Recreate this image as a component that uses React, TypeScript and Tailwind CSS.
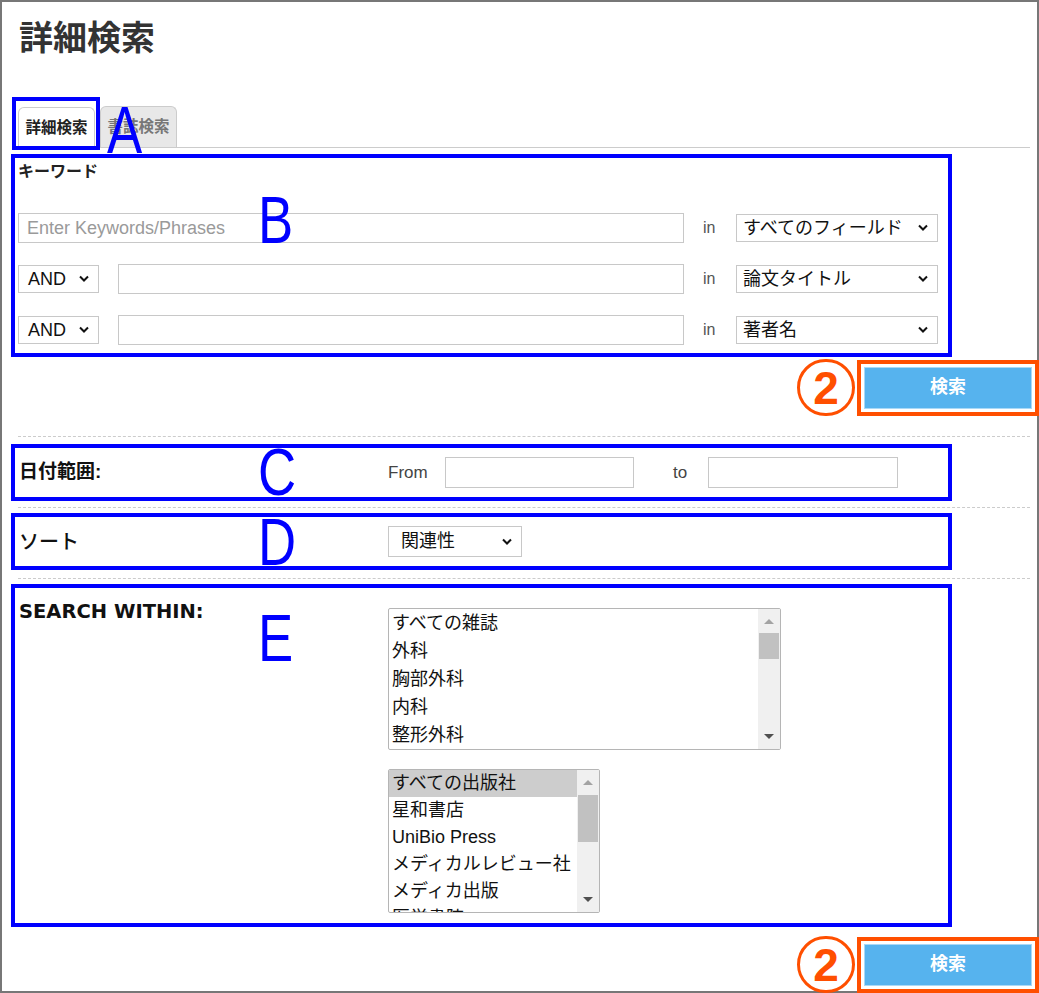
const FONT = "font-['Liberation_Sans','Noto_Sans_CJK_JP',sans-serif]"

function Chevron() {
  return (
    <svg width="12" height="8" viewBox="0 0 12 8" className="shrink-0">
      <polyline points="2,1.5 6,5.5 10,1.5" fill="none" stroke="#111" strokeWidth="2" />
    </svg>
  )
}

function FakeSelect({ label, className }: { label: string; className: string }) {
  return (
    <div className={`flex items-center justify-between border border-[#c8c8c8] bg-white pr-[8px] text-[18px] text-[#111] ${className}`}>
      <span className="whitespace-nowrap">{label}</span>
      <Chevron />
    </div>
  )
}

function TextBox({ className, placeholder }: { className: string; placeholder?: string }) {
  return (
    <div className={`flex items-center border border-[#c8c8c8] bg-white px-[8px] text-[18px] text-[#9a9a9a] ${className}`}>
      {placeholder}
    </div>
  )
}

function ListBox({
  items,
  className,
  lineH,
  selected,
  thumbTop,
  thumbH,
}: {
  items: string[]
  className: string
  lineH: string
  selected?: number
  thumbTop: string
  thumbH: string
}) {
  return (
    <div className={`flex overflow-hidden rounded-[2px] border border-[#b5b5b5] bg-white ${className}`}>
      <div className="flex-1 overflow-hidden">
        {items.map((it, i) => (
          <div
            key={it}
            className={`${lineH} whitespace-nowrap pl-[3px] text-[18px] text-[#111] ${i === selected ? 'bg-[#cdcdcd]' : ''}`}
          >
            {it}
          </div>
        ))}
      </div>
      <div className="relative w-[22px] shrink-0 bg-[#f0f0f0]">
        <svg width="22" height="12" viewBox="0 0 22 12" className="absolute left-0 top-[6px]">
          <polygon points="6,9 11,4 16,9" fill="#a3a3a3" />
        </svg>
        <div className={`absolute left-[1px] right-[1px] bg-[#c1c1c1] ${thumbTop} ${thumbH}`} />
        <svg width="22" height="12" viewBox="0 0 22 12" className="absolute bottom-[6px] left-0">
          <polygon points="6,3 11,8 16,3" fill="#505050" />
        </svg>
      </div>
    </div>
  )
}

function Marker({ label, className }: { label: string; className: string }) {
  return (
    <div
      className={`absolute origin-left scale-x-[0.8] font-['Liberation_Sans',sans-serif] text-[66px] leading-none text-[#0000ff] ${className}`}
    >
      {label}
    </div>
  )
}

function SubmitRow({ className }: { className: string }) {
  return (
    <div className={`-mr-[2px] flex items-center justify-end gap-[2px] ${className}`}>
      <div className="flex h-[57px] w-[58px] items-center justify-center rounded-full border-[3px] border-[#ff4f00] font-['Liberation_Sans',sans-serif] text-[46px] font-bold leading-none text-[#ff4f00]">
        2
      </div>
      <div className="h-[56px] w-[182px] border-4 border-[#ff4f00] bg-white p-[3px]">
        <div className="flex h-full w-full items-center justify-center border border-[#a9d9f7] bg-[#56b3ee] text-[18px] font-bold text-white">
          検索
        </div>
      </div>
    </div>
  )
}

export default function App() {
  return (
    <div className={`relative h-[993px] w-[1039px] border-2 border-[#777] bg-white ${FONT}`}>
      <h1 className="ml-[17px] mt-[16px] text-[34px] font-bold leading-[40px] text-[#333]">詳細検索</h1>

      <div className="ml-[16px] mr-[7px] mt-[48px] flex items-end gap-[5px] border-b border-[#ccc]">
        <div className="-mb-px flex h-[41px] w-[77px] items-center justify-center rounded-t-[6px] border border-b-0 border-[#ccc] bg-white text-[15.5px] font-bold text-[#222]">
          詳細検索
        </div>
        <div className="flex h-[41px] w-[77px] items-center justify-center rounded-t-[6px] border border-b-0 border-[#ccc] bg-[#e8e8e8] text-[15.5px] font-bold text-[#777]">
          書誌検索
        </div>
      </div>

      {/* B: keywords */}
      <div className="ml-[9px] mt-[6px] h-[203px] w-[941px] border-4 border-[#0000ff] pl-[3px] pr-[10px]">
        <div className="mt-[3px] text-[16px] font-bold leading-[22px] text-[#222]">キーワード</div>
        <div className="mt-[30px] flex flex-col gap-[21px]">
          <div className="flex h-[30px] items-center">
            <TextBox className="h-[30px] w-[666px]" placeholder="Enter Keywords/Phrases" />
            <span className="w-[52px] pl-[19px] text-[16px] text-[#555]">in</span>
            <FakeSelect label="すべてのフィールド" className="h-[28px] w-[202px] pl-[6px]" />
          </div>
          <div className="flex h-[30px] items-center">
            <FakeSelect label="AND" className="h-[28px] w-[81px] pl-[9px]" />
            <TextBox className="ml-[19px] h-[30px] w-[566px]" />
            <span className="w-[52px] pl-[19px] text-[16px] text-[#555]">in</span>
            <FakeSelect label="論文タイトル" className="h-[28px] w-[202px] pl-[6px]" />
          </div>
          <div className="flex h-[30px] items-center">
            <FakeSelect label="AND" className="h-[28px] w-[81px] pl-[9px]" />
            <TextBox className="ml-[19px] h-[30px] w-[566px]" />
            <span className="w-[52px] pl-[19px] text-[16px] text-[#555]">in</span>
            <FakeSelect label="著者名" className="h-[28px] w-[202px] pl-[6px]" />
          </div>
        </div>
      </div>

      <SubmitRow className="mt-[2px]" />

      <div className="ml-[16px] mr-[7px] mt-[20px] border-t border-dashed border-[#ccc]" />

      {/* C: date range */}
      <div className="ml-[9px] mt-[7px] flex h-[57px] w-[941px] items-center border-4 border-[#0000ff]">
        <div className="w-[373px] pl-[4px] text-[19px] font-bold text-[#111]">日付範囲:</div>
        <span className="w-[57px] text-[17px] text-[#444]">From</span>
        <TextBox className="h-[31px] w-[189px]" />
        <span className="ml-[39px] w-[35px] text-[17px] text-[#444]">to</span>
        <TextBox className="h-[31px] w-[190px]" />
      </div>

      <div className="ml-[16px] mr-[7px] mt-[6px] border-t border-dashed border-[#ccc]" />

      {/* D: sort */}
      <div className="ml-[9px] mt-[5px] flex h-[57px] w-[941px] items-center border-4 border-[#0000ff]">
        <div className="w-[373px] pl-[4px] text-[20px] font-medium text-[#111]">ソート</div>
        <FakeSelect label="関連性" className="h-[31px] w-[134px] pl-[12px]" />
      </div>

      <div className="ml-[16px] mr-[7px] mt-[8px] border-t border-dashed border-[#ccc]" />

      {/* E: search within */}
      <div className="ml-[9px] mt-[5px] grid h-[343px] w-[941px] grid-cols-[373px_1fr] border-4 border-[#0000ff]">
        <div className="pl-[4px] pt-[12px] font-['DejaVu_Sans',sans-serif] text-[19.5px] font-bold leading-[24px] text-[#111]">
          SEARCH WITHIN:
        </div>
        <div className="flex flex-col items-start gap-[19px] pt-[20px]">
          <ListBox
            items={['すべての雑誌', '外科', '胸部外科', '内科', '整形外科']}
            className="h-[142px] w-[393px]"
            lineH="leading-[28px]"
            thumbTop="top-[24px]"
            thumbH="h-[26px]"
          />
          <ListBox
            items={['すべての出版社', '星和書店', 'UniBio Press', 'メディカルレビュー社', 'メディカ出版', '医学書院']}
            className="h-[144px] w-[212px]"
            lineH="leading-[27px]"
            selected={0}
            thumbTop="top-[25px]"
            thumbH="h-[47px]"
          />
        </div>
      </div>

      <SubmitRow className="mt-[9px]" />

      {/* annotation overlays */}
      <div className="absolute left-[10px] top-[95px] h-[53px] w-[88px] border-4 border-[#0000ff]" />
      <Marker label="A" className="left-[105px] top-[95px]" />
      <Marker label="B" className="left-[256px] top-[185px]" />
      <Marker label="C" className="left-[256px] top-[437px]" />
      <Marker label="D" className="left-[256px] top-[507px]" />
      <Marker label="E" className="left-[256px] top-[603px]" />
    </div>
  )
}
